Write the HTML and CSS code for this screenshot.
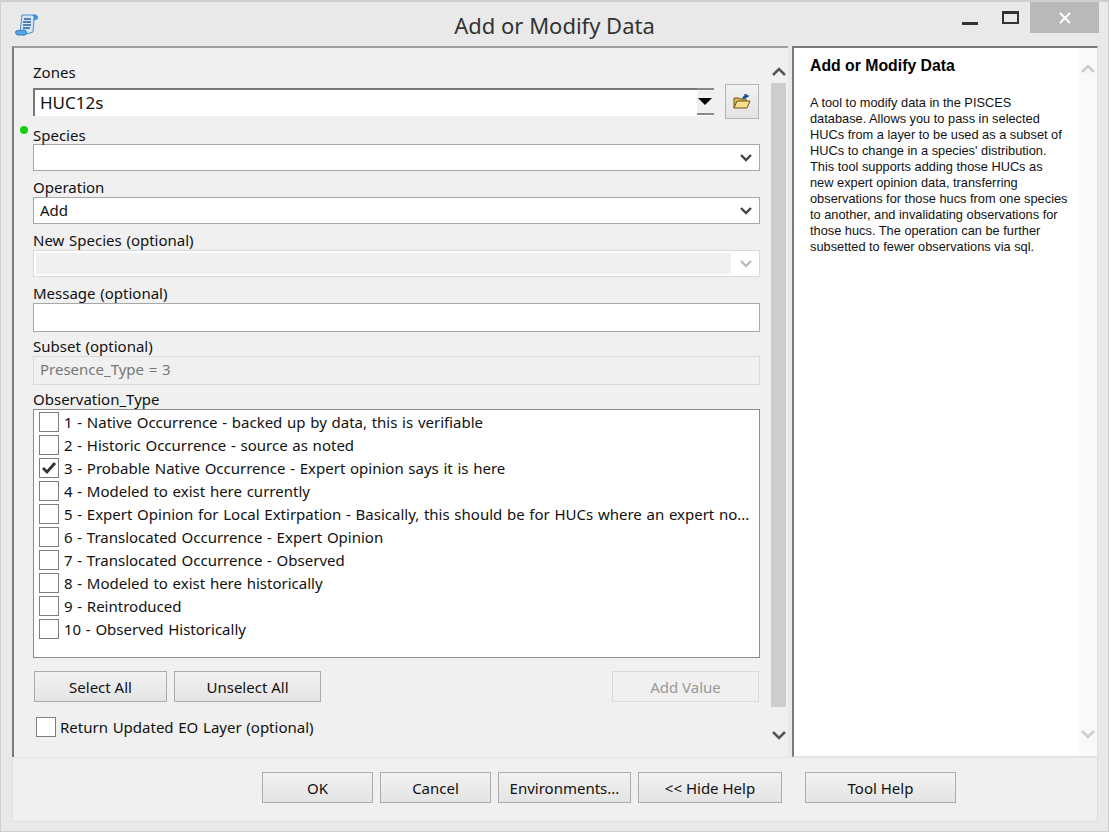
FILE: index.html
```html
<!DOCTYPE html>
<html lang="en">
<head>
<meta charset="UTF-8">
<title>Add or Modify Data</title>
<link rel="stylesheet" href="styles.css">
</head>
<body>
<div class="window">
    <header class="titlebar">
        <svg class="app-icon" width="24" height="24" viewBox="0 0 24 24">
            <path d="M7 2h13c2 0 3 1 2 4l-3 1-1 12-10 3-3-2z" fill="#d4e6f8" stroke="#4a8fd0"/>
            <path d="M17 2c2 1 2 3 1 5l4-1c1-2 0-4-2-4z" fill="#3f8fdc"/>
            <path d="M9 6h7M8 9h8M8 12h8M8 15h7" stroke="#2a5f96" stroke-width="1.400"/>
            <path d="M1 18l8-1c3 0 3 4 1 5l-7 0c-2 0-3-2-2-4z" fill="#5aa5e8" stroke="#3478bc"/>
        </svg>
        <div class="title">Add or Modify Data</div>
        <div class="win-btns">
            <span class="win-min"></span>
            <span class="win-max"></span>
            <span class="win-close">
                <svg width="14" height="14" viewBox="0 0 14 14"><path d="M2 2l10 10M12 2L2 12" stroke="#fff" stroke-width="2"/></svg>
            </span>
        </div>
    </header>

    <div class="main">
        <div class="form-pane">
            <div class="form">
                <span class="green-dot"></span>
                <div class="field zones">
                    <label>Zones</label>
                    <div class="zones-row">
                        <div class="zones-combo">
                            <span class="zones-value">HUC12s</span>
                            <span class="zones-arrow"></span>
                        </div>
                        <button class="browse">
                            <svg width="18" height="16" viewBox="0 0 18 16">
                                <path d="M1 14V4h5l1 1h6v2" fill="#e2bd4e" stroke="#6b5618"/>
                                <path d="M1 14l3-7h13l-3 7z" fill="#f6e08c" stroke="#6b5618"/>
                                <path d="M10 5c0-2 2-3 4-3M12 0.500l3 1.500-3 2z" stroke="#1f4f96" stroke-width="1.400" fill="#1f4f96"/>
                            </svg>
                        </button>
                    </div>
                </div>
                <div class="field species">
                    <label>Species</label>
                    <div class="box select"><span></span><svg class="chev" width="12" height="8" viewBox="0 0 12 8"><path d="M1 1l5 5 5-5" fill="none" stroke="#444" stroke-width="2.400"/></svg></div>
                </div>
                <div class="field">
                    <label>Operation</label>
                    <div class="box select"><span>Add</span><svg class="chev" width="12" height="8" viewBox="0 0 12 8"><path d="M1 1l5 5 5-5" fill="none" stroke="#444" stroke-width="2.400"/></svg></div>
                </div>
                <div class="field">
                    <label>New Species (optional)</label>
                    <div class="box select disabled"><span class="fill"></span><svg class="chev" width="12" height="8" viewBox="0 0 12 8"><path d="M1 1l5 5 5-5" fill="none" stroke="#bbb" stroke-width="2.400"/></svg></div>
                </div>
                <div class="field message">
                    <label>Message (optional)</label>
                    <div class="box tall"></div>
                </div>
                <div class="field subset">
                    <label>Subset (optional)</label>
                    <div class="box tall readonly">Presence_Type = 3</div>
                </div>
                <div class="field obs">
                    <label>Observation_Type</label>
                    <ul class="checklist">
                        <li><span class="check"></span>1 - Native Occurrence - backed up by data, this is verifiable</li>
                        <li><span class="check"></span>2 - Historic Occurrence - source as noted</li>
                        <li><span class="check"><svg width="16" height="14" viewBox="0 0 16 14"><path d="M2 7l4 4 8-9" fill="none" stroke="#333" stroke-width="2.800"/></svg></span>3 - Probable Native Occurrence - Expert opinion says it is here</li>
                        <li><span class="check"></span>4 - Modeled to exist here currently</li>
                        <li><span class="check"></span>5 - Expert Opinion for Local Extirpation - Basically, this should be for HUCs where an expert no...</li>
                        <li><span class="check"></span>6 - Translocated Occurrence - Expert Opinion</li>
                        <li><span class="check"></span>7 - Translocated Occurrence - Observed</li>
                        <li><span class="check"></span>8 - Modeled to exist here historically</li>
                        <li><span class="check"></span>9 - Reintroduced</li>
                        <li><span class="check"></span>10 - Observed Historically</li>
                    </ul>
                </div>
                <div class="list-btns">
                    <button class="btn select-all">Select All</button>
                    <button class="btn unselect-all">Unselect All</button>
                    <button class="btn add-value" disabled>Add Value</button>
                </div>
                <div class="return-row">
                    <span class="check"></span>Return Updated EO Layer (optional)
                </div>
            </div>
            <div class="scrollbar">
                <svg width="14" height="9" viewBox="0 0 14 9"><path d="M1 8l6-6 6 6" fill="none" stroke="#555" stroke-width="2.500"/></svg>
                <div class="track"><div class="thumb"></div></div>
                <svg width="14" height="9" viewBox="0 0 14 9"><path d="M1 1l6 6 6-6" fill="none" stroke="#555" stroke-width="2.500"/></svg>
            </div>
        </div>

        <div class="help-pane">
            <div class="help-text">
                <h2>Add or Modify Data</h2>
                <p>A tool to modify data in the PISCES<br>
                database. Allows you to pass in selected<br>
                HUCs from a layer to be used as a subset of<br>
                HUCs to change in a species' distribution.<br>
                This tool supports adding those HUCs as<br>
                new expert opinion data, transferring<br>
                observations for those hucs from one species<br>
                to another, and invalidating observations for<br>
                those hucs. The operation can be further<br>
                subsetted to fewer observations via sql.</p>
            </div>
            <div class="help-scroll">
                <svg width="14" height="9" viewBox="0 0 14 9"><path d="M1 8l6-6 6 6" fill="none" stroke="#ccc" stroke-width="2.500"/></svg>
                <svg width="14" height="9" viewBox="0 0 14 9"><path d="M1 1l6 6 6-6" fill="none" stroke="#ccc" stroke-width="2.500"/></svg>
            </div>
        </div>
    </div>

    <footer class="footer">
        <button class="btn f-ok">OK</button>
        <button class="btn f-cancel">Cancel</button>
        <button class="btn f-env">Environments...</button>
        <button class="btn f-hide">&lt;&lt; Hide Help</button>
        <button class="btn f-tool">Tool Help</button>
    </footer>
</div>
</body>
</html>
```

FILE: styles.css
```css
* {
    box-sizing: border-box;
}
html, body {
    height: 100%;
}
body {
    margin: 0;
    background: #fff;
    font-family: "Noto Sans", "Open Sans", sans-serif;
    font-size: 15px;
    word-spacing: 0.8px;
    color: #111;
}
.window {
    width: 1109px;
    height: 832px;
    background: #e9e9e9;
    border: 1px solid #cfcfcf;
    border-width: 2px 1px 1px 1px;
    padding: 0 10px 9px 11px;
    display: flex;
    flex-direction: column;
}

/* title bar */
.titlebar {
    height: 44px;
    flex: none;
    display: flex;
    position: relative;
    margin: 0 -10px 0 -11px;
}
.app-icon {
    position: absolute;
    left: 14px;
    top: 11px;
}
.title {
    flex: 1;
    text-align: center;
    font-size: 22px;
    line-height: 47px;
    word-spacing: 0;
    color: #333;
}
.win-btns {
    position: absolute;
    top: 0;
    right: 9px;
    display: flex;
}
.win-min {
    width: 16px;
    height: 3px;
    margin: 20px 24px 0 0;
    background: #333;
}
.win-max {
    width: 17px;
    height: 13px;
    margin: 9px 11px 0 0;
    border: 2px solid #333;
    border-top-width: 3px;
}
.win-close {
    width: 69px;
    height: 31px;
    background: #b9b9b9;
    display: flex;
    justify-content: center;
    align-items: center;
}

/* panes */
.main {
    flex: 1;
    display: flex;
    min-height: 0;
}
.form-pane {
    width: 776px;
    background: #f0f0f0;
    border-left: 2px solid #7a7a7a;
    border-top: 2px solid #a0a0a0;
    display: flex;
    padding-right: 1px;
}
.form {
    width: 757px;
    position: relative;
    padding: 14px 0 0 19px;
}
.green-dot {
    position: absolute;
    left: 6px;
    top: 78px;
    width: 8px;
    height: 8px;
    border-radius: 50%;
    background: #10d010;
}
.field {
    margin-bottom: 6px;
}
.field label {
    display: block;
    height: 20px;
    line-height: 20px;
    white-space: nowrap;
}
.zones-row {
    display: flex;
    align-items: center;
    height: 35px;
    margin-top: 2px;
}
.zones-combo {
    width: 681px;
    height: 28px;
    background: #fff;
    border-left: 2px solid #777;
    border-top: 2px solid #777;
    display: flex;
    align-items: center;
    position: relative;
}
.zones-value {
    padding-left: 5px;
    font-size: 17px;
}
.zones-arrow {
    position: absolute;
    right: 0;
    top: -2px;
    bottom: 0;
    width: 17px;
    background: #f0f0f0;
    border-bottom: 2px solid #8a8a8a;
    border-top: 2px solid #8a8a8a;
    margin-bottom: 1px;
}
.zones-arrow::after {
    content: "";
    position: absolute;
    left: 1px;
    top: 8px;
    border: 7px solid transparent;
    border-top: 7px solid #000;
    border-bottom: 0;
}
.browse {
    width: 34px;
    height: 35px;
    margin-left: 11px;
    padding: 0;
    border: 1px solid #b4b4b4;
    background: linear-gradient(#f2f2f2, #e3e3e3);
    display: flex;
    align-items: center;
    justify-content: center;
}
.box {
    width: 727px;
    height: 27px;
    background: #fff;
    border: 1px solid #a8a8a8;
    padding-left: 6px;
    line-height: 25px;
}
.box.tall {
    height: 29px;
    line-height: 25px;
}
.select {
    display: flex;
    align-items: center;
    justify-content: space-between;
    padding-right: 7px;
}
.select.disabled {
    border-color: #d9d9d9;
    padding-left: 2px;
}
.select .fill {
    width: 695px;
    height: 21px;
    background: #f0f0f0;
}
.message {
    margin-top: 6px;
}
.subset {
    margin-top: -2px;
}
.readonly {
    background: #f0f0f0;
    border-color: #d9d9d9;
    color: #777;
}
.species {
    margin-top: 6px;
}
.species label {
    height: 19px;
}
.obs {
    margin-bottom: 13px;
}
.field.obs label {
    height: 20px;
    margin-top: -2px;
}
.checklist {
    list-style: none;
    margin: 0;
    width: 727px;
    height: 249px;
    padding: 0 0 0 5px;
    background: #fff;
    border: 1px solid #8c8c8c;
}
.checklist li {
    height: 23px;
    display: flex;
    align-items: center;
    white-space: nowrap;
}
.check {
    width: 20px;
    height: 20px;
    flex: none;
    margin-right: 5px;
    background: #fff;
    border: 1px solid #7d7d7d;
    display: flex;
    align-items: center;
    justify-content: center;
}
.btn {
    height: 31px;
    padding: 0;
    font: inherit;
    color: #111;
    border: 1px solid #acacac;
    background: linear-gradient(#f2f2f2, #e4e4e4);
}
.btn:disabled {
    color: #999;
    background: #f0f0f0;
    border-color: #dadada;
}
.list-btns {
    display: flex;
    padding-left: 1px;
}
.select-all {
    width: 133px;
    margin-right: 7px;
}
.unselect-all {
    width: 147px;
    margin-right: 291px;
}
.add-value {
    width: 147px;
}
.return-row {
    display: flex;
    align-items: center;
    height: 20px;
    margin-top: 15px;
    padding-left: 3px;
    white-space: nowrap;
}
.return-row .check {
    margin-right: 4px;
}
.scrollbar {
    width: 15px;
    padding: 19px 0 17px;
    display: flex;
    flex-direction: column;
    align-items: center;
}
.track {
    flex: 1;
    width: 15px;
    margin: 7px 0 24px;
}
.thumb {
    height: 100%;
    background: #cdcdcd;
}
.help-pane {
    width: 306px;
    margin-left: 4px;
    background: #fff;
    border-left: 2px solid #7a7a7a;
    border-top: 2px solid #7a7a7a;
    border-right: 1px solid #e0e0e0;
    border-bottom: 1px solid #e0e0e0;
    display: flex;
}
.help-text {
    width: 285px;
    padding: 8px 0 0 16px;
    font-family: "Liberation Sans", Arial, sans-serif;
    font-size: 12.8px;
    word-spacing: 0;
    line-height: 16px;
    white-space: nowrap;
}
.help-text h2 {
    margin: 0 0 19px;
    font-size: 15.8px;
    line-height: 20px;
    color: #000;
}
.help-text p {
    margin: 0;
}
.help-scroll {
    flex: 1;
    background: #f9f9f9;
    padding: 16px 0 17px;
    display: flex;
    flex-direction: column;
    justify-content: space-between;
    align-items: center;
}

/* bottom buttons */
.footer {
    height: 65px;
    flex: none;
    background: #f0f0f0;
    border: 1px solid #dedede;
    border-top: 1px solid #e6e6e6;
    display: flex;
    padding: 14px 0 0 249px;
}
.footer .btn {
    margin-right: 7px;
}
.f-ok, .f-cancel {
    width: 111px;
}
.f-env {
    width: 133px;
}
.f-hide {
    width: 144px;
}
.footer .f-hide {
    margin-right: 23px;
}
.f-tool {
    width: 151px;
}
```
